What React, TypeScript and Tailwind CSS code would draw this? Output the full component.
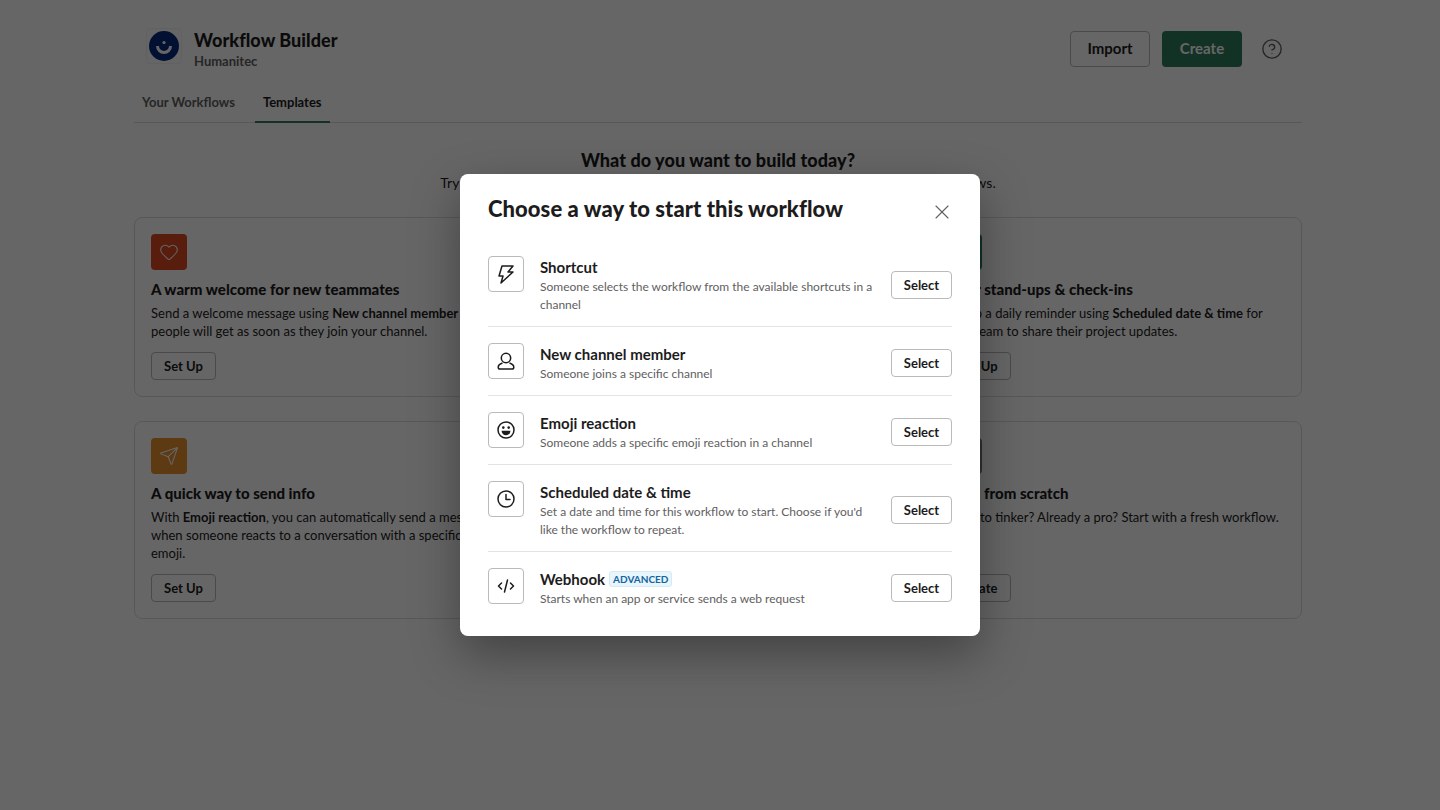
import { CircleHelp, Heart, Send, Plus, X } from 'lucide-react'

function BoltIcon() {
  return (
    <svg viewBox="0 0 20 20" className="h-5 w-5" fill="none" stroke="currentColor" strokeWidth="1.5" strokeLinejoin="round" strokeLinecap="round">
      <path d="M6 2h11l-5 6h5L5 19l2-7H3z" />
    </svg>
  )
}

function PersonIcon() {
  return (
    <svg viewBox="0 0 20 20" className="h-5 w-5" fill="none" stroke="currentColor" strokeWidth="1.5" strokeLinejoin="round">
      <circle cx="10" cy="7" r="4.700" />
      <path d="M6.500 12c-2.500.8-4.300 2.500-4.300 4.200 0 1 .7 1.800 1.700 1.800h12.200c1 0 1.700-.8 1.700-1.800 0-1.700-1.800-3.400-4.300-4.200" />
    </svg>
  )
}

function EmojiIcon() {
  return (
    <svg viewBox="0 0 20 20" className="h-5 w-5" fill="none">
      <circle cx="10" cy="10" r="8" stroke="currentColor" strokeWidth="1.500" />
      <circle cx="7.300" cy="7.600" r="1.300" fill="currentColor" />
      <circle cx="12.700" cy="7.600" r="1.300" fill="currentColor" />
      <path d="M5.600 10.800h8.800c0 2.700-2 4.500-4.400 4.500s-4.400-1.800-4.400-4.500z" fill="currentColor" />
    </svg>
  )
}

function ClockIcon() {
  return (
    <svg viewBox="0 0 20 20" className="h-5 w-5" fill="none" stroke="currentColor" strokeWidth="1.500" strokeLinecap="round" strokeLinejoin="round">
      <circle cx="10" cy="10" r="8" />
      <path d="M10 5.500V10.500H14" />
    </svg>
  )
}

function CodeIcon() {
  return (
    <svg viewBox="0 0 20 20" className="h-5 w-5" fill="none" stroke="currentColor" strokeWidth="1.500" strokeLinecap="round" strokeLinejoin="round">
      <path d="M5.500 7 2.500 10l3 3M14.500 7l3 3-3 3M11.500 4 8.500 16" />
    </svg>
  )
}

function Logo() {
  return (
    <span className="flex h-9 w-9 shrink-0 items-center justify-center rounded border border-[#f2f2f2] bg-white">
      <svg viewBox="0 0 30 30" className="h-[30px] w-[30px]">
        <circle cx="15" cy="15" r="15" fill="#062a7d" />
        <circle cx="15" cy="11.500" r="1.600" fill="#fff" />
        <path d="M7 15h3a5 5 0 0 0 10 0h3a8 8 0 0 1-16 0z" fill="#fff" />
      </svg>
    </span>
  )
}

function TemplateCard({
  iconClass,
  icon,
  title,
  action = 'Set Up',
  children,
}: {
  iconClass: string
  icon: React.ReactNode
  title: string
  action?: string
  children: React.ReactNode
}) {
  return (
    <div className="flex flex-col rounded-lg border border-[#dddddd] p-4">
      <span className={`flex h-9 w-9 items-center justify-center rounded text-white ${iconClass}`}>{icon}</span>
      <h3 className="mt-[7px] text-[15px] leading-6 font-black tracking-[0.03px] text-[#1d1c1d]">{title}</h3>
      <p className="mt-[3px] mb-3 text-[13px] leading-[18px] text-[#1d1c1d]">{children}</p>
      <button className="mt-auto h-7 w-[65px] rounded border border-[#bbbabb] pt-0.5 text-[13px] font-bold text-[#1d1c1d]">{action}</button>
    </div>
  )
}

const triggers = [
  { name: 'Shortcut', desc: 'Someone selects the workflow from the available shortcuts in a channel', icon: <BoltIcon /> },
  { name: 'New channel member', desc: 'Someone joins a specific channel', icon: <PersonIcon /> },
  { name: 'Emoji reaction', desc: 'Someone adds a specific emoji reaction in a channel', icon: <EmojiIcon /> },
  { name: 'Scheduled date & time', desc: "Set a date and time for this workflow to start. Choose if you'd like the workflow to repeat.", icon: <ClockIcon /> },
  { name: 'Webhook', desc: 'Starts when an app or service sends a web request', icon: <CodeIcon />, badge: 'ADVANCED' },
]

export default function App() {
  return (
    <div className="relative h-[810px] overflow-hidden bg-white font-[Lato,sans-serif] text-[#1d1c1d]">
      <div className="mx-auto w-[1168px] translate-x-[-2px]">
        <header className="flex h-[90px] items-start justify-between pt-[28px] pr-[19px] pl-3">
          <div className="flex gap-3">
            <Logo />
            <div>
              <h1 className="text-lg leading-6 font-black tracking-[0.06px]">Workflow Builder</h1>
              <p className="text-[13px] leading-[18px] font-bold text-[#616061]">Humanitec</p>
            </div>
          </div>
          <div className="flex items-center gap-3 pt-[3px]">
            <button className="h-9 w-20 rounded border border-[#bbbabb] pb-0.5 text-[15px] font-bold">Import</button>
            <button className="h-9 w-20 rounded bg-[#2f7d5f] pb-0.5 text-[15px] font-bold text-white">Create</button>
            <CircleHelp className="ml-[7px] h-[22px] w-[22px] text-[#616061]" strokeWidth={1.5} />
          </div>
        </header>
        <nav className="flex h-[33px] border-b border-[#dddddd] text-[13px] leading-[18px] font-bold">
          <a className="h-[33px] px-2 pt-[3px] text-[#616061]">Your Workflows</a>
          <a className="ml-3 h-[33px] border-b-2 border-[#2f7d5f] px-2 pt-[3px]">Templates</a>
        </nav>
        <div className="mt-[25px] text-center">
          <h2 className="text-lg leading-6 font-black tracking-[0.06px]">What do you want to build today?</h2>
          <p className="mt-px text-sm leading-5 tracking-[0.02px]">Try one of these templates or start from scratch to learn how to build your own workflows.</p>
        </div>
        <div className="mt-6 grid grid-cols-3 gap-6">
          <TemplateCard iconClass="bg-[#dd4a22]" icon={<Heart className="h-5 w-5" strokeWidth={1.25} />} title="A warm welcome for new teammates">
            Send a welcome message using <b>New channel member</b> that people will get as soon as they join your channel.
          </TemplateCard>
          <TemplateCard iconClass="bg-[#1264a3]" icon={<Send className="h-5 w-5" strokeWidth={1.25} />} title="Collect feedback from your team">
            Use a <b>Shortcut</b> to open a form and gather responses from everyone in one channel.
          </TemplateCard>
          <TemplateCard iconClass="bg-[#2f7d5f]" icon={<Plus className="h-5 w-5" strokeWidth={1.25} />} title="Clear stand-ups & check-ins">
            Set up a daily reminder using <b>Scheduled date &amp; time</b> for your team to share their project updates.
          </TemplateCard>
          <TemplateCard iconClass="bg-[#e8912d]" icon={<Send className="h-5 w-5" strokeWidth={1.25} />} title="A quick way to send info">
            With <b>Emoji reaction</b>, you can automatically send a message when someone reacts to a conversation with a specific emoji.
          </TemplateCard>
          <TemplateCard iconClass="bg-[#1264a3]" icon={<Send className="h-5 w-5" strokeWidth={1.25} />} title="Route requests to the right place">
            Use a <b>Webhook</b> to post a message whenever another service sends a request.
          </TemplateCard>
          <TemplateCard iconClass="bg-[#7a7a7a]" icon={<Plus className="h-5 w-5" strokeWidth={1.25} />} title="Build from scratch" action="Create">
            Want to tinker? Already a pro? Start with a fresh workflow.
          </TemplateCard>
        </div>
      </div>

      <div className="absolute inset-0 flex items-start justify-center bg-black/60 pt-[174px]">
        <div className="w-[520px] rounded-lg bg-white px-7 pt-5 pb-4 shadow-[0_18px_48px_0_rgba(0,0,0,0.35)]">
          <div className="mb-4 flex h-[30px] items-center justify-between">
            <h2 className="text-[22px] leading-[30px] font-black tracking-[0.06px]">Choose a way to start this workflow</h2>
            <X className="mt-1.5 -mr-0.5 h-6 w-6 text-[#616061]" strokeWidth={1.1} />
          </div>
          {triggers.map((t, i) => (
            <div key={t.name} className={`flex items-center pt-4 pb-3 ${i > 0 ? 'border-t border-[#e3e3e3]' : ''}`}>
              <span className="flex h-9 w-9 shrink-0 self-start items-center justify-center rounded border border-[#bbbabb]">{t.icon}</span>
              <div className="ml-4 min-w-0 flex-1">
                <div className="flex items-center gap-1 text-[15px] leading-[22px] font-bold">
                  {t.name}
                  {t.badge && (
                    <span className="flex h-4 items-center rounded-[3px] border border-[#d4ebf5] bg-[#e8f5fa] px-[3px] text-[10px] font-bold text-[#1264a3]">{t.badge}</span>
                  )}
                </div>
                <p className="text-xs leading-[18px] text-[#616061]">{t.desc}</p>
              </div>
              <button className="ml-4 h-7 w-[61px] shrink-0 rounded border border-[#bbbabb] pt-0.5 text-[13px] font-bold">Select</button>
            </div>
          ))}
        </div>
      </div>
    </div>
  )
}
